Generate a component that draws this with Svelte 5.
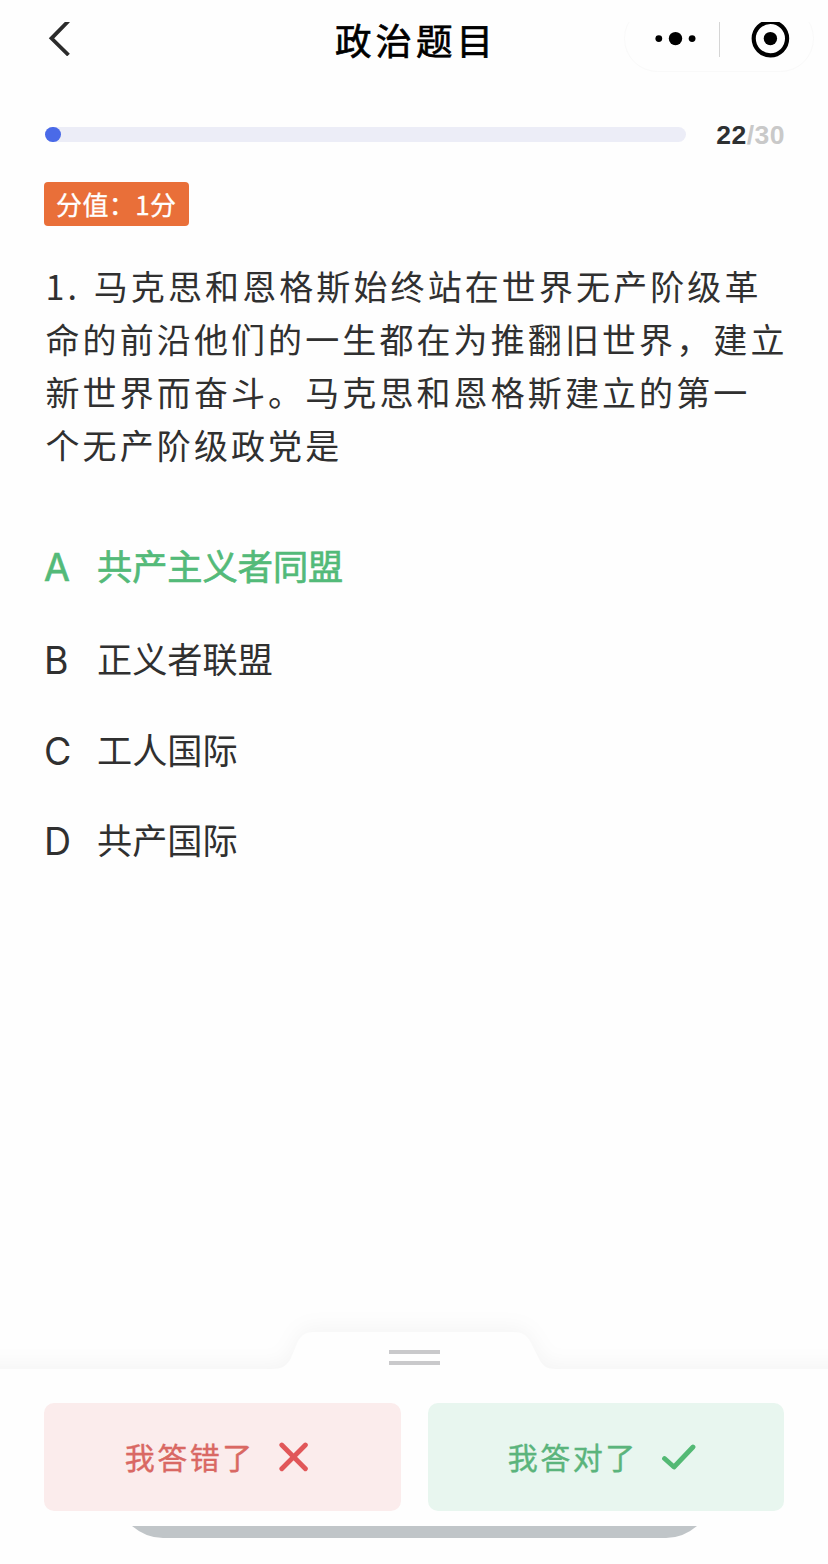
<script lang="ts">
	interface Option {
		key: string;
		text: string;
		correct?: boolean;
	}

	const current = 22;
	const total = 30;
	const progress = 0;

	const question = [
		'1. 马克思和恩格斯始终站在世界无产阶级革',
		'命的前沿他们的一生都在为推翻旧世界，建立',
		'新世界而奋斗。马克思和恩格斯建立的第一',
		'个无产阶级政党是'
	];

	const options: Option[] = [
		{ key: 'A', text: '共产主义者同盟', correct: true },
		{ key: 'B', text: '正义者联盟' },
		{ key: 'C', text: '工人国际' },
		{ key: 'D', text: '共产国际' }
	];
</script>

<div class="page">
	<header class="nav">
		<button class="back" aria-label="返回">
			<svg width="24" height="36" viewBox="0 0 24 36">
				<path d="M21.5 0 L4.5 17.3 L21.5 34" fill="none" stroke="#2b2b2b" stroke-width="3.8" />
			</svg>
		</button>
		<h1 class="title">政治题目</h1>
		<div class="capsule-clip">
			<div class="capsule">
				<svg width="42" height="16" viewBox="0 0 42 16">
					<circle cx="3.8" cy="7.6" r="3.4" />
					<circle cx="20.5" cy="7.6" r="6.7" />
					<circle cx="37.1" cy="7.6" r="3.4" />
				</svg>
				<span class="divider"></span>
				<svg width="40" height="40" viewBox="0 0 40 40">
					<circle cx="19.4" cy="19.6" r="16.7" fill="none" stroke="#000" stroke-width="4.2" />
					<circle cx="19.4" cy="19.6" r="6.7" />
				</svg>
			</div>
		</div>
	</header>

	<main class="content">
		<div class="progress">
			<div class="track">
				<div class="fill" style="width: {progress}%"></div>
			</div>
			<div class="count"><b>{current}</b><span>/{total}</span></div>
		</div>

		<span class="badge">分值：1分</span>

		<div class="question">
			{#each question as line}
				<p>{line}</p>
			{/each}
		</div>

		<ul class="options">
			{#each options as option}
				<li class="option" class:correct={option.correct}>
					<span class="key">{option.key}</span>
					<span class="text">{option.text}</span>
				</li>
			{/each}
		</ul>
	</main>

	<footer class="sheet">
		<svg class="edge" width="828" height="78" viewBox="0 0 828 78">
			<path
				d="M-40 59 H272 C282 59 287 56 291 48 L296 36 C300 26 304 22 315 22 H512 C522 22 527 25 531 33 L539 49 C543 56 546 59 556 59 H868 V130 H-40 Z"
				fill="#fefefe"
			/>
			<path d="M389 42 H440 M389 53 H440" stroke="#c9c9cb" stroke-width="4" />
		</svg>
		<div class="actions">
			<button class="action wrong">
				<span>我答错了</span>
				<svg width="30" height="30" viewBox="0 0 30 30">
					<path d="M2.8 3 L26.4 26.8 M26.4 3 L2.8 26.8" stroke-width="4.8" />
				</svg>
			</button>
			<button class="action right">
				<span>我答对了</span>
				<svg width="34" height="28" viewBox="0 0 34 28">
					<path d="M2.5 15.5 L12 24 L31 4" stroke-width="4.8" />
				</svg>
			</button>
		</div>
		<svg class="home-bar" width="566" height="12" viewBox="0 0 566 12">
			<path d="M0 0 H565 Q551 12 534 12 H31 Q14 12 0 0 Z" fill="#c0c5c8" />
		</svg>
	</footer>
</div>

<style>
	:global(body) {
		margin: 0;
		background: #fefefe;
	}

	.page {
		display: flex;
		flex-direction: column;
		width: 828px;
		height: 1564px;
		overflow: hidden;
		box-sizing: border-box;
		background: #fefefe;
		color: #303030;
		font-family: 'Noto Sans CJK SC', sans-serif;
	}

	button {
		border: 0;
		padding: 0;
		background: none;
		font: inherit;
	}

	svg {
		display: block;
		flex: none;
	}

	.nav {
		display: grid;
		grid-template-columns: 1fr auto 1fr;
		height: 73px;
	}

	.back {
		justify-self: start;
		height: 34px;
		overflow: hidden;
		margin: 22px 0 0 47px;
	}

	.back svg {
		margin-top: -1px;
	}

	.title {
		margin: 12px -4px 0 0;
		font-size: 36.5px;
		font-weight: 400;
		line-height: 56px;
		letter-spacing: 4px;
		color: #000;
		-webkit-text-stroke: 0.7px #000;
	}

	.capsule-clip {
		justify-self: end;
		height: 51px;
		margin: 22px 14px 0 0;
		overflow: hidden;
	}

	.capsule {
		display: flex;
		align-items: center;
		box-sizing: border-box;
		width: 190px;
		height: 67px;
		margin-top: -17px;
		padding-left: 30px;
		border: 1px solid #f9f9f9;
		border-radius: 34px;
	}

	.divider {
		width: 1px;
		height: 36px;
		margin: 0 31px 0 22px;
		background: #d5d5d5;
	}

	.content {
		display: flex;
		flex: 1;
		flex-direction: column;
		align-items: flex-start;
		padding: 47px 43px 0 44px;
	}

	.progress {
		display: flex;
		align-items: center;
		align-self: stretch;
		justify-content: space-between;
		height: 30px;
	}

	.track {
		width: 641px;
		height: 15px;
		margin: 0 0 2px 1px;
		border-radius: 8px;
		background: #ecedf7;
	}

	.fill {
		min-width: 16px;
		height: 15px;
		border-radius: 8px;
		background: #4a6ae8;
	}

	.count {
		font: bold 26.5px/30px 'Liberation Sans', sans-serif;
		letter-spacing: 0.5px;
		color: #c9c9c9;
	}

	.count b {
		color: #2d3032;
	}

	.badge {
		box-sizing: border-box;
		width: 145px;
		height: 44px;
		margin-top: 32px;
		padding-left: 12px;
		border-radius: 4px;
		background: #e96f39;
		color: #fff;
		font-size: 26px;
		line-height: 43px;
		letter-spacing: 0.4px;
		white-space: nowrap;
		-webkit-text-stroke: 0.3px #fff;
	}

	.question {
		margin: 33px 0 0 1.5px;
		font-size: 34px;
		line-height: 53px;
		letter-spacing: 3.1px;
		word-spacing: 3px;
		white-space: nowrap;
	}

	.question p {
		margin: 0;
	}

	.options {
		display: flex;
		flex-direction: column;
		gap: 38.5px;
		margin: 70px 0 0;
		padding: 0;
		list-style: none;
	}

	.option {
		display: flex;
		align-items: center;
		height: 52px;
		font-size: 35.2px;
	}

	.key {
		width: 53px;
		padding-top: 1px;
		font-family: Inter, sans-serif;
		font-size: 37.5px;
	}

	.text {
		padding-bottom: 5px;
	}

	.correct {
		margin-bottom: 2.5px;
		color: #53ba79;
		-webkit-text-stroke: 0.7px #53ba79;
	}

	.sheet {
		display: flex;
		flex-direction: column;
		height: 254px;
	}

	.edge path:first-child {
		filter: drop-shadow(0 -4px 10px rgba(0, 0, 0, 0.04));
	}

	.actions {
		display: grid;
		grid-template-columns: 1fr 1fr;
		gap: 27px;
		margin-top: 15px;
		padding: 0 44px;
	}

	.action {
		display: flex;
		align-items: center;
		justify-content: center;
		gap: 24px;
		box-sizing: border-box;
		height: 108px;
		border-radius: 10px;
		font-size: 30px;
		letter-spacing: 2.5px;
	}

	.action span {
		padding-bottom: 3px;
	}

	.action path {
		fill: none;
		stroke-linecap: round;
		stroke-linejoin: round;
	}

	.wrong {
		padding-right: 11px;
		background: #fbecec;
		color: #d96863;
		-webkit-text-stroke: 0.4px #d96863;
	}

	.wrong path {
		stroke: #e15759;
	}

	.right {
		padding-right: 8px;
		background: #e8f6ef;
		color: #5bb47c;
		-webkit-text-stroke: 0.4px #5bb47c;
	}

	.right path {
		stroke: #53b974;
	}

	.home-bar {
		margin: 15px 0 0 132px;
	}
</style>
